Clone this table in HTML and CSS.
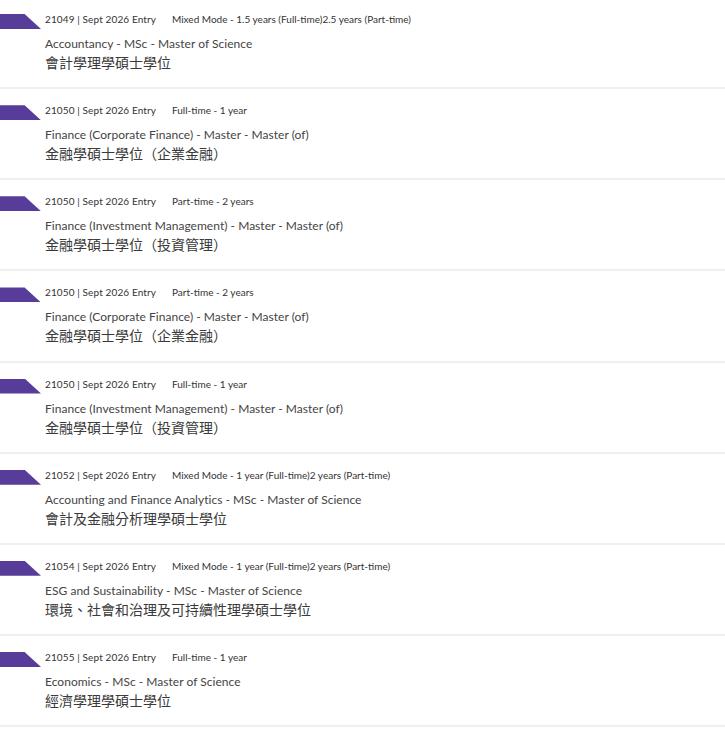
FILE: index.html
```html
<!DOCTYPE html>
<html lang="zh-Hant">
<head>
  <meta charset="UTF-8" />
  <title>Programmes</title>
  <link rel="stylesheet" href="styles.css">
</head>
<body>
  <ul class="programme-list">
    <li class="programme">
      <span class="tag"></span>
      <div class="info">
        <div class="meta"><span class="code">21049 | Sept 2026 Entry</span><span class="mode">Mixed Mode - 1.5 years (Full-time)2.5 years (Part-time)</span></div>
        <div class="name-en">Accountancy - MSc - Master of Science</div>
        <div class="name-zh">會計學理學碩士學位</div>
      </div>
    </li>
    <li class="programme">
      <span class="tag"></span>
      <div class="info">
        <div class="meta"><span class="code">21050 | Sept 2026 Entry</span><span class="mode">Full-time - 1 year</span></div>
        <div class="name-en">Finance (Corporate Finance) - Master - Master (of)</div>
        <div class="name-zh">金融學碩士學位（企業金融）</div>
      </div>
    </li>
    <li class="programme">
      <span class="tag"></span>
      <div class="info">
        <div class="meta"><span class="code">21050 | Sept 2026 Entry</span><span class="mode">Part-time - 2 years</span></div>
        <div class="name-en">Finance (Investment Management) - Master - Master (of)</div>
        <div class="name-zh">金融學碩士學位（投資管理）</div>
      </div>
    </li>
    <li class="programme">
      <span class="tag"></span>
      <div class="info">
        <div class="meta"><span class="code">21050 | Sept 2026 Entry</span><span class="mode">Part-time - 2 years</span></div>
        <div class="name-en">Finance (Corporate Finance) - Master - Master (of)</div>
        <div class="name-zh">金融學碩士學位（企業金融）</div>
      </div>
    </li>
    <li class="programme">
      <span class="tag"></span>
      <div class="info">
        <div class="meta"><span class="code">21050 | Sept 2026 Entry</span><span class="mode">Full-time - 1 year</span></div>
        <div class="name-en">Finance (Investment Management) - Master - Master (of)</div>
        <div class="name-zh">金融學碩士學位（投資管理）</div>
      </div>
    </li>
    <li class="programme">
      <span class="tag"></span>
      <div class="info">
        <div class="meta"><span class="code">21052 | Sept 2026 Entry</span><span class="mode">Mixed Mode - 1 year (Full-time)2 years (Part-time)</span></div>
        <div class="name-en">Accounting and Finance Analytics - MSc - Master of Science</div>
        <div class="name-zh">會計及金融分析理學碩士學位</div>
      </div>
    </li>
    <li class="programme">
      <span class="tag"></span>
      <div class="info">
        <div class="meta"><span class="code">21054 | Sept 2026 Entry</span><span class="mode">Mixed Mode - 1 year (Full-time)2 years (Part-time)</span></div>
        <div class="name-en">ESG and Sustainability - MSc - Master of Science</div>
        <div class="name-zh">環境、社會和治理及可持續性理學碩士學位</div>
      </div>
    </li>
    <li class="programme">
      <span class="tag"></span>
      <div class="info">
        <div class="meta"><span class="code">21055 | Sept 2026 Entry</span><span class="mode">Full-time - 1 year</span></div>
        <div class="name-en">Economics - MSc - Master of Science</div>
        <div class="name-zh">經濟學理學碩士學位</div>
      </div>
    </li>
  </ul>
</body>
</html>
```

FILE: styles.css
```css
body {
  margin: 0;
  background: #fff;
  font-family: Lato, "Noto Sans CJK TC", sans-serif;
  color: #444;
}

.programme-list {
  list-style: none;
  margin: -2px 0 0;
  padding: 0;
}

.programme {
  display: flex;
  align-items: flex-start;
  gap: 4px;
  height: 91.14px;
  box-sizing: border-box;
  padding-top: 16px;
  border-bottom: 2px solid #f0f0f0;
}

.tag {
  flex: none;
  width: 41px;
  height: 15px;
  background: #583c99;
  clip-path: polygon(0 0, 60% 0, 100% 100%, 0 100%);
}

.info {
  margin-top: -2px;
}

.meta {
  font-size: 10px;
  line-height: 14px;
  color: #333;
  white-space: nowrap;
}

.code {
  display: inline-block;
  width: 127px;
  letter-spacing: 0.12px;
}

.name-en {
  margin-top: 10px;
  font-size: 12px;
  line-height: 16px;
  letter-spacing: 0.03px;
}

.name-zh {
  margin-top: 1px;
  font-family: "Noto Sans CJK TC", sans-serif;
  font-size: 14px;
  line-height: 19px;
  color: #3a3a3a;
}
```
